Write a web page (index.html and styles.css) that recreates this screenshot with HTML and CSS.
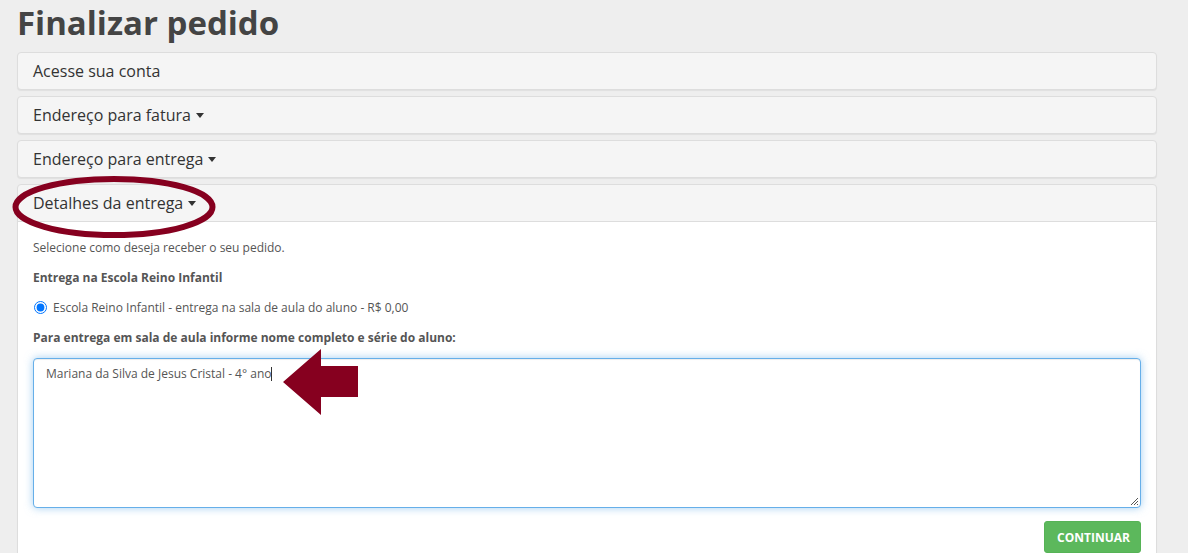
FILE: index.html
```html
<!DOCTYPE html>
<html lang="pt-BR">
<head>
<meta charset="utf-8">
<title>Finalizar pedido</title>
<link rel="stylesheet" href="styles.css">
</head>
<body>
<div class="page">
  <h1 class="title">Finalizar pedido</h1>
  <div class="panels">
    <div class="panel">
      <div class="panel-heading">Acesse sua conta</div>
    </div>
    <div class="panel">
      <div class="panel-heading">Endereço para fatura <span class="caret"></span></div>
    </div>
    <div class="panel">
      <div class="panel-heading">Endereço para entrega <span class="caret"></span></div>
    </div>
    <div class="panel panel-open">
      <div class="panel-heading">Detalhes da entrega <span class="caret"></span></div>
      <div class="panel-body">
        <p class="intro">Selecione como deseja receber o seu pedido.</p>
        <p class="group-title">Entrega na Escola Reino Infantil</p>
        <label class="radio-row">
          <input type="radio" name="entrega" checked>
          <span>Escola Reino Infantil - entrega na sala de aula do aluno - R$ 0,00</span>
        </label>
        <p class="group-title field-label">Para entrega em sala de aula informe nome completo e série do aluno:</p>
        <div class="textarea">
          <span class="typed">Mariana da Silva de Jesus Cristal - 4° ano</span><span class="caret-line"></span>
          <svg class="grip" width="10" height="10" viewBox="0 0 10 10">
            <path d="M9 2 L2 9 M9 5 L5 9 M9 8 L8 9" stroke="#555" stroke-width="1" fill="none"/>
          </svg>
        </div>
        <div class="actions">
          <button class="btn-continue" type="button">Continuar</button>
        </div>
      </div>
    </div>
  </div>
  <svg class="annot-ellipse" width="220" height="70" viewBox="0 0 220 70">
    <ellipse cx="104" cy="32" rx="98.5" ry="28" fill="none" stroke="#86001f" stroke-width="6"/>
  </svg>
  <svg class="annot-arrow" width="80" height="70" viewBox="0 0 80 70">
    <polygon points="3,33 41,0 41,17 78,17 78,48 41,48 41,66" fill="#86001f"/>
  </svg>
</div>
</body>
</html>
```
FILE: styles.css
```css
html, body {
  margin: 0;
  padding: 0;
}
body {
  background: #eeeeee;
  font-family: "Open Sans", "Liberation Sans", sans-serif;
  color: #333;
  overflow: hidden;
}
.page {
  position: relative;
  width: 1140px;
  margin-left: 17px;
}
.title {
  margin: 5px 0 12px 0;
  font-size: 33px;
  line-height: 35px;
  font-weight: 700;
  color: #444;
}
.panels {
  display: flex;
  flex-direction: column;
  gap: 6px;
}
.panel {
  background: #f5f5f5;
  border: 1px solid #dddddd;
  border-radius: 4px;
  box-shadow: 0 1px 1px rgba(0,0,0,0.06);
}
.panel-open {
  border-bottom-left-radius: 0;
  border-bottom-right-radius: 0;
}
.panel-heading {
  padding: 9px 15px;
  font-size: 16px;
  line-height: 18px;
  color: #333;
}
.caret {
  display: inline-block;
  width: 0;
  height: 0;
  margin-left: 1px;
  vertical-align: middle;
  border-top: 5px solid #333;
  border-left: 4.5px solid transparent;
  border-right: 4.5px solid transparent;
  position: relative;
  top: -1px;
}
.panel-body {
  background: #fff;
  border-top: 1px solid #dddddd;
  padding: 17px 15px 15px 15px;
  font-size: 12px;
  line-height: 17px;
  color: #555;
}
.panel-body p {
  margin: 0;
}
.intro {
  margin-bottom: 13px !important;
}
.group-title {
  font-weight: 700;
  margin-bottom: 13px !important;
}
.field-label {
  margin-bottom: 12px !important;
}
.radio-row {
  display: flex;
  align-items: center;
  height: 17px;
  margin-bottom: 13px;
}
.radio-row input {
  margin: 0 6px 0 1px;
  width: 13px;
  height: 13px;
}
.textarea {
  position: relative;
  box-sizing: border-box;
  height: 150px;
  border: 1px solid #66afe9;
  border-radius: 4px;
  padding: 6px 12px;
  color: #555;
  background: #fff;
  box-shadow: inset 0 1px 1px rgba(0,0,0,0.075), 0 0 8px rgba(102,175,233,0.6);
}
.caret-line {
  display: inline-block;
  width: 1px;
  height: 14px;
  background: #333;
  vertical-align: -3px;
}
.grip {
  position: absolute;
  right: 1px;
  bottom: 1px;
}
.actions {
  display: flex;
  justify-content: flex-end;
  margin-top: 13px;
}
.btn-continue {
  font-family: "Open Sans", "Liberation Sans", sans-serif;
  font-size: 12px;
  line-height: 17px;
  font-weight: 700;
  text-transform: uppercase;
  color: #fff;
  background: #5cb85c;
  border: 1px solid #56b356;
  border-radius: 3px;
  padding: 7px 12px 6px 12px;
  width: 97px;
}
.annot-ellipse {
  position: absolute;
  left: -7px;
  top: 170px;
}
.annot-arrow {
  position: absolute;
  left: 263px;
  top: 344px;
}
```
